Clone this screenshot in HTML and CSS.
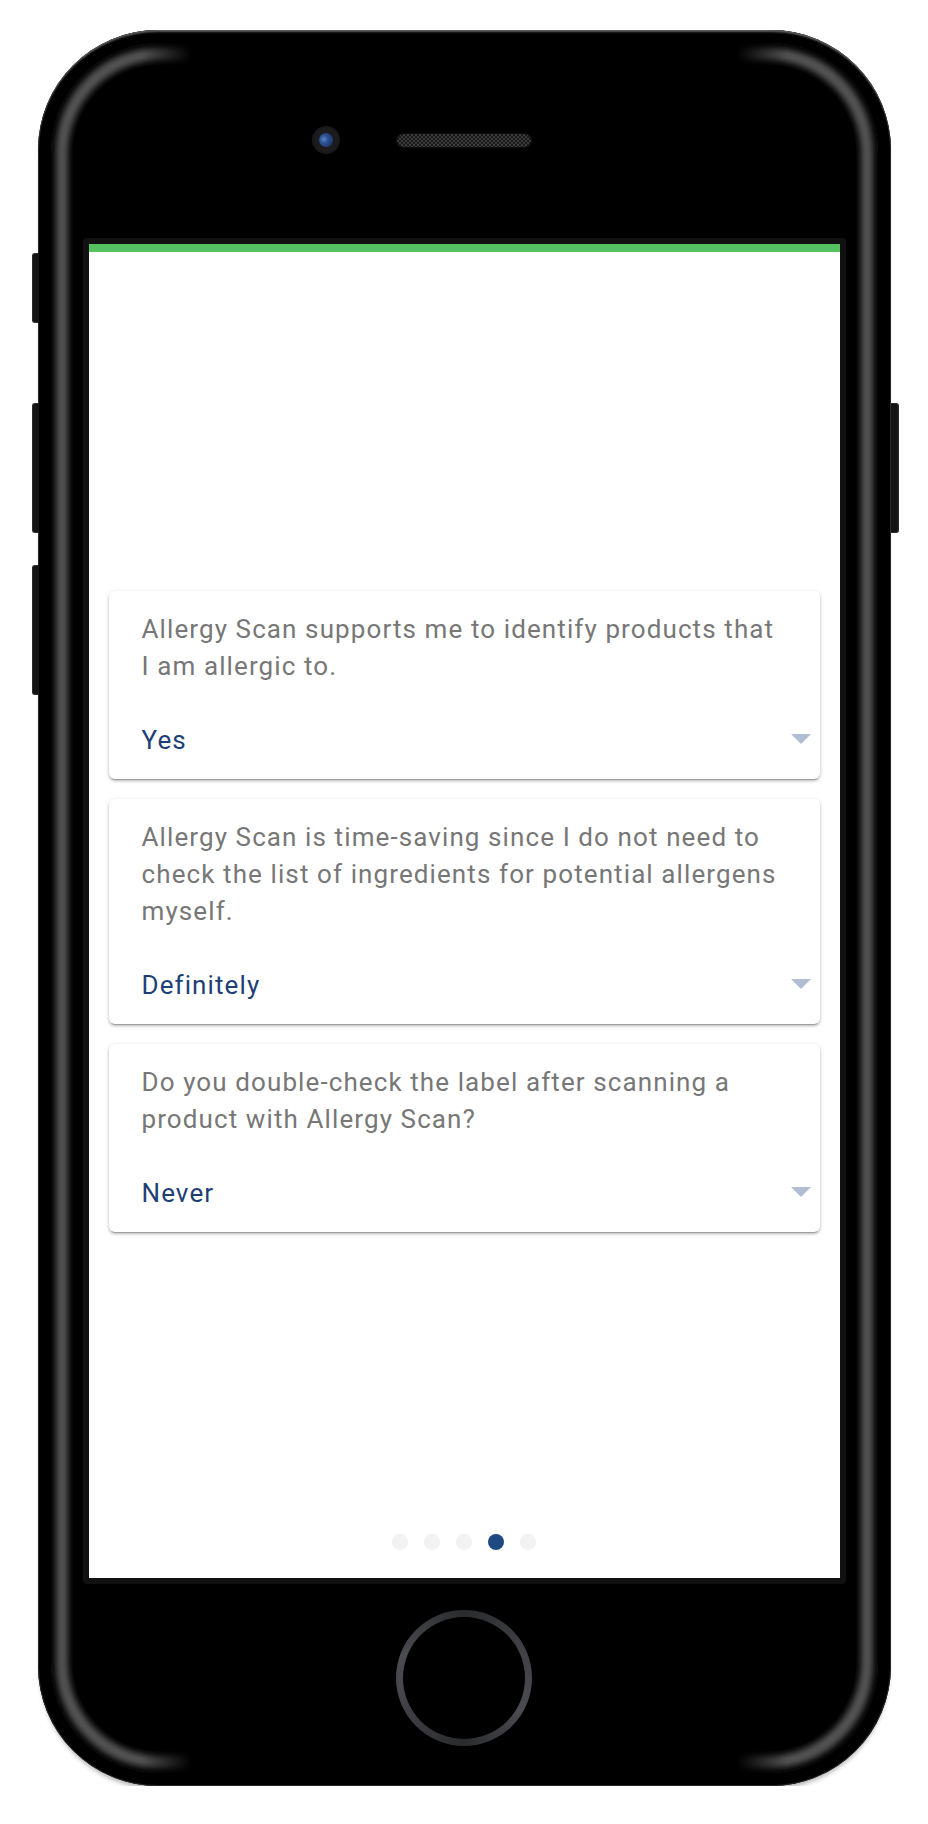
FILE: index.html
```html
<!DOCTYPE html>
<html lang="en">
<head>
<meta charset="utf-8">
<title>Allergy Scan survey</title>
<link rel="stylesheet" href="styles.css">
</head>
<body>
<div class="phone">
  <div class="bezel"></div>
  <span class="side-btn left b1"></span>
  <span class="side-btn left b2"></span>
  <span class="side-btn left b3"></span>
  <span class="side-btn right b4"></span>

  <div class="top">
    <div class="camera"><div class="lens"></div></div>
    <div class="speaker"></div>
  </div>

  <div class="screen-frame">
    <div class="screen">
      <div class="content">
        <div class="card">
          <p class="question">Allergy Scan supports me to identify products that I am allergic to.</p>
          <div class="answer"><span>Yes</span><span class="caret"></span></div>
        </div>
        <div class="card">
          <p class="question">Allergy Scan is time-saving since I do not need to check the list of ingredients for potential allergens myself.</p>
          <div class="answer"><span>Definitely</span><span class="caret"></span></div>
        </div>
        <div class="card">
          <p class="question">Do you double-check the label after scanning a product with Allergy Scan?</p>
          <div class="answer"><span>Never</span><span class="caret"></span></div>
        </div>
      </div>
      <div class="dots">
        <span class="dot"></span>
        <span class="dot"></span>
        <span class="dot"></span>
        <span class="dot active"></span>
        <span class="dot"></span>
      </div>
    </div>
  </div>

  <div class="bottom">
    <div class="home"><div class="home-inner"></div></div>
  </div>
</div>
</body>
</html>
```

FILE: styles.css
```css
* { box-sizing: border-box; }

html, body {
  margin: 0;
  padding: 0;
  background: #ffffff;
}

body {
  font-family: Roboto, "Liberation Sans", sans-serif;
}

.phone {
  position: relative;
  width: 853px;
  height: 1756px;
  margin: 30px auto 0;
  border-radius: 120px;
  background: #000;
  display: flex;
  flex-direction: column;
  box-shadow:
    inset 0 3px 2px -1px #5e5e5e,
    inset 0 0 0 1px #262626,
    0 5px 4px -2px rgba(0, 0, 0, 0.28);
}

.bezel {
  position: absolute;
  inset: 13px;
  border-radius: 108px;
  background: #555;
  box-shadow: inset 0 0 6px 5px #000;
  -webkit-mask-image: linear-gradient(to right, #000 0, #000 11%, transparent 17%, transparent 83%, #000 89%, #000 100%);
  mask-image: linear-gradient(to right, #000 0, #000 11%, transparent 17%, transparent 83%, #000 89%, #000 100%);
  pointer-events: none;
}

.bezel::after {
  content: "";
  position: absolute;
  inset: 22px;
  border-radius: 88px;
  background: #000;
  box-shadow: 0 0 6px 5px #000;
}

.side-btn {
  position: absolute;
  width: 7px;
  background: #141414;
  border: 1px solid #2c2c2c;
}

.side-btn.left { left: -6px; border-radius: 3px 0 0 3px; border-right: none; }
.side-btn.right { right: -8px; width: 8px; border-radius: 0 3px 3px 0; border-left: none; }

.b1 { top: 223px; height: 70px; }
.b2 { top: 373px; height: 130px; }
.b3 { top: 535px; height: 130px; }
.b4 { top: 373px; height: 130px; }

.top {
  position: relative;
  height: 208px;
  padding: 12px 85px 0 0;
  display: flex;
  align-items: center;
  justify-content: center;
  gap: 57px;
}

.camera {
  width: 28px;
  height: 28px;
  border-radius: 50%;
  background: radial-gradient(circle at 50% 50%, #1c1c1e 55%, #0c0c0c 100%);
  display: flex;
  align-items: center;
  justify-content: center;
}

.lens {
  width: 14px;
  height: 14px;
  border-radius: 50%;
  background: radial-gradient(circle at 35% 45%, #5d86c8 0, #2c4f8e 35%, #172c55 100%);
}

.speaker {
  width: 134px;
  height: 13px;
  border-radius: 7px;
  background-color: #1a1a1a;
  background-image:
    linear-gradient(45deg, #3a3a3a 25%, transparent 25%, transparent 75%, #3a3a3a 75%),
    linear-gradient(45deg, #3a3a3a 25%, transparent 25%, transparent 75%, #3a3a3a 75%);
  background-size: 4px 4px;
  background-position: 0 0, 2px 2px;
  box-shadow: 0 0 2px 1px #111;
}

.screen-frame {
  position: relative;
  margin: 0 45px;
  height: 1346px;
  border: 6px solid #111;
  border-radius: 4px;
  background: #111;
}

.screen {
  height: 100%;
  background: #fff;
  border-top: 8px solid #56c162;
  display: flex;
  flex-direction: column;
}

.content {
  flex: 1;
  padding: 36px 20px 0;
  display: flex;
  flex-direction: column;
  justify-content: center;
  gap: 20px;
}

.card {
  background: #fff;
  border-radius: 6px;
  padding: 20px 9px 20px 33px;
  box-shadow:
    0 2px 3px 0 rgba(0, 0, 0, 0.22),
    0 3px 1px -2px rgba(0, 0, 0, 0.2),
    0 1px 5px 0 rgba(0, 0, 0, 0.1);
}

.question {
  margin: 0 26px 37px 0;
  font-size: 26px;
  line-height: 37px;
  letter-spacing: 1.1px;
  color: #777777;
}

.answer {
  display: flex;
  align-items: center;
  justify-content: space-between;
  font-size: 26px;
  line-height: 37px;
  letter-spacing: 1.1px;
  color: #1e3f76;
}

.caret {
  width: 0;
  height: 0;
  border-left: 10px solid transparent;
  border-right: 10px solid transparent;
  border-top: 10px solid #b0bdd3;
  margin-top: -2px;
}

.dots {
  display: flex;
  justify-content: center;
  gap: 16px;
  padding-bottom: 28px;
}

.dot {
  width: 16px;
  height: 16px;
  border-radius: 50%;
  background: #f2f2f2;
}

.dot.active {
  background: #1f4a80;
}

.bottom {
  position: relative;
  flex: 1;
  display: flex;
  justify-content: center;
  padding-top: 26px;
}

.home {
  width: 136px;
  height: 136px;
  border-radius: 50%;
  padding: 7px;
  background: conic-gradient(from 0deg, #2a2b2d, #3e4044 60deg, #4a4c50 120deg, #2a2b2d 180deg, #45474b 260deg, #4a4c50 290deg, #2a2b2d 360deg);
}

.home-inner {
  width: 100%;
  height: 100%;
  border-radius: 50%;
  background: #000;
}
```
